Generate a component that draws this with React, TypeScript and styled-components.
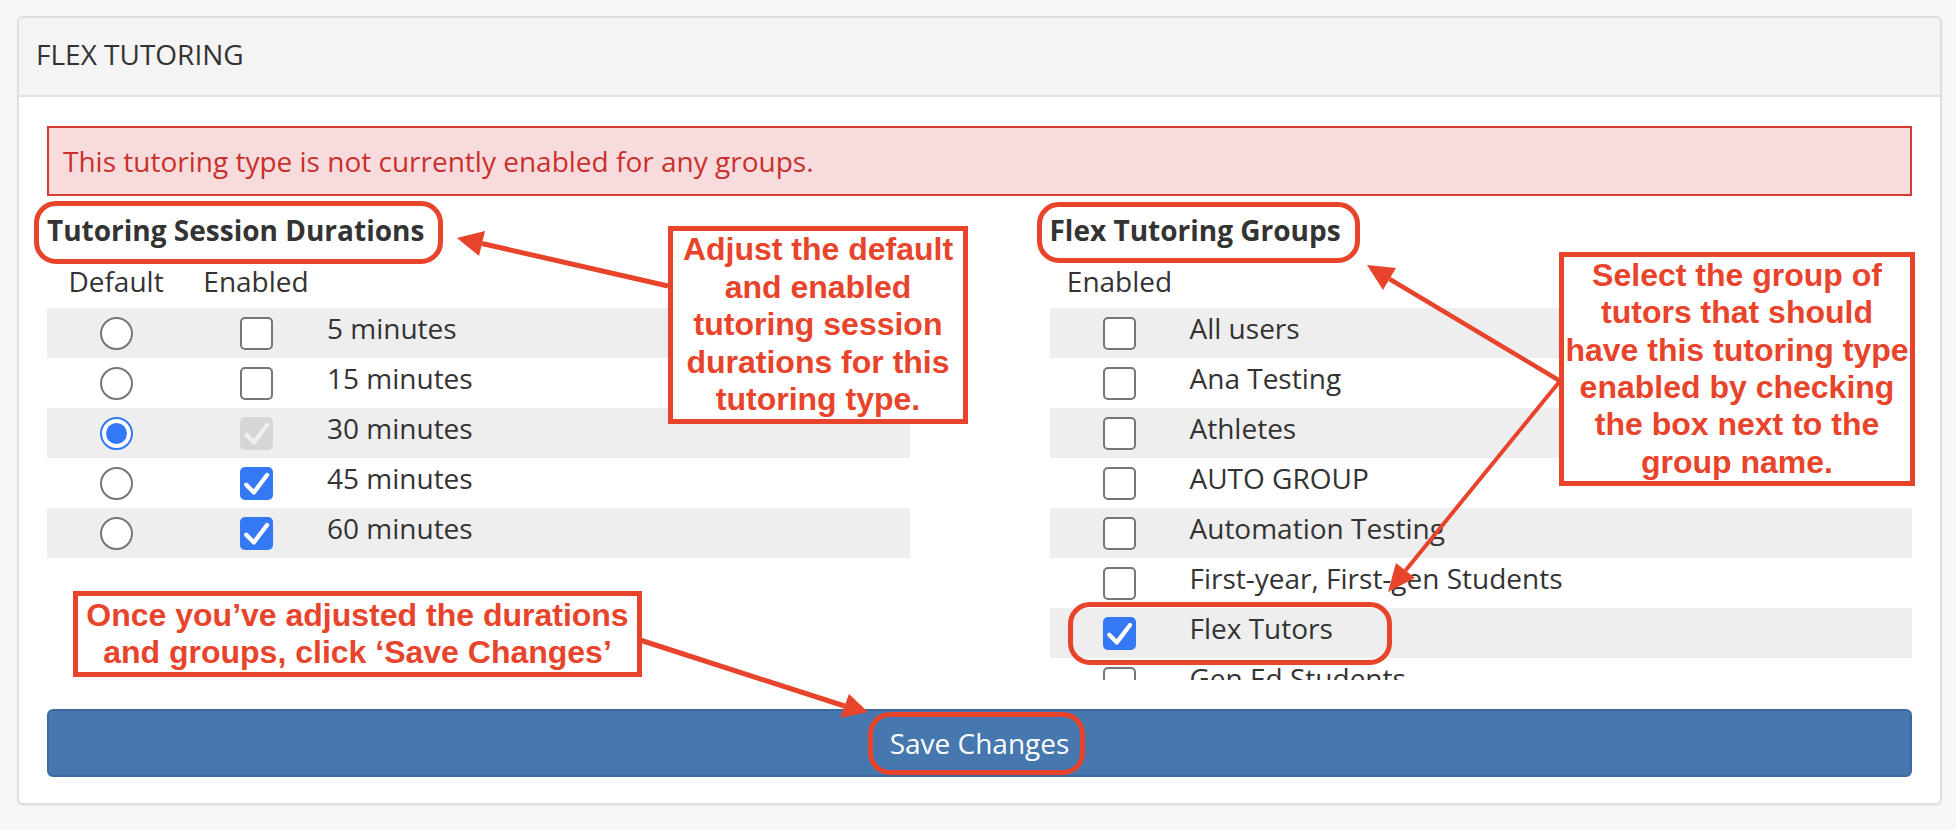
import React from "react";
import styled, { createGlobalStyle } from "styled-components";

const ANNOT = "#e8442b";

const GlobalStyle = createGlobalStyle`
  html, body { margin: 0; padding: 0; }
  body {
    background: #f7f7f7;
    font-family: "Open Sans", "Noto Sans", sans-serif;
    color: #333333;
    -webkit-font-smoothing: antialiased;
  }
  * { box-sizing: border-box; }
`;

const Page = styled.div`
  position: relative;
  width: 1956px;
  height: 830px;
  padding: 16px 14px 0 17px;
  overflow: hidden;
`;

const Panel = styled.section`
  background: #ffffff;
  border: 2px solid #dedede;
  border-radius: 6px;
  box-shadow: 0 1px 2px rgba(0, 0, 0, 0.06);
  overflow: hidden;
`;

const PanelHeading = styled.header`
  background: #f4f4f4;
  border-bottom: 2px solid #e0e0e0;
  padding: 16px 17px 21px;
  font-size: 28px;
  line-height: 40px;
  color: #333333;
`;

const PanelBody = styled.div`
  padding: 29px 28px 26px;
`;

const Alert = styled.div`
  background: #f8dcdd;
  border: 2px solid #d83a30;
  color: #c9302c;
  padding: 13px 14px;
  font-size: 28px;
  line-height: 40px;
`;

const Columns = styled.div`
  margin-top: 14px;
  display: grid;
  grid-template-columns: 1fr 1fr;
  column-gap: 140px;
  align-items: start;
`;

const Column = styled.div`
  display: flex;
  flex-direction: column;
`;

const SectionTitle = styled.h3`
  margin: 0;
  font-size: 28px;
  line-height: 40px;
  font-weight: 700;
  color: #333333;
`;

const Grid = styled.div<{ $cols: string }>`
  display: grid;
  grid-template-columns: ${(p) => p.$cols};
  align-items: center;
`;

const HeadRow = styled(Grid)`
  padding: 11px 0 7px;
  font-size: 28px;
  line-height: 40px;
  color: #333333;
`;

const HeadCell = styled.div`
  text-align: center;
`;

const Row = styled(Grid)<{ $striped: boolean }>`
  height: 50px;
  background: ${(p) => (p.$striped ? "#eeeeee" : "#ffffff")};
`;

const Cell = styled.div`
  display: flex;
  justify-content: center;
  align-items: center;
`;

const Label = styled.div`
  font-size: 28px;
  line-height: 40px;
  padding-bottom: 11px;
  color: #333333;
  white-space: nowrap;
`;

const ScrollList = styled.div`
  height: 372px;
  overflow: hidden;
`;

const RadioDot = styled.span<{ $on: boolean }>`
  position: relative;
  width: 33px;
  height: 33px;
  border-radius: 50%;
  border: 2px solid ${(p) => (p.$on ? "#3478f6" : "#767676")};
  background: #ffffff;
  &::after {
    content: "";
    display: ${(p) => (p.$on ? "block" : "none")};
    position: absolute;
    left: 4px;
    top: 4px;
    width: 21px;
    height: 21px;
    border-radius: 50%;
    background: #3478f6;
  }
`;

const Box = styled.span<{ $checked: boolean; $disabled: boolean }>`
  display: flex;
  align-items: center;
  justify-content: center;
  width: 33px;
  height: 33px;
  border-radius: 5px;
  border: ${(p) => (p.$checked ? "none" : "2px solid #767676")};
  background: ${(p) =>
    !p.$checked ? "#ffffff" : p.$disabled ? "#d6d6d6" : "#3478f6"};
  color: ${(p) => (p.$disabled ? "#efefef" : "#ffffff")};
`;

const SaveButton = styled.button`
  display: block;
  width: 100%;
  margin-top: 29px;
  height: 68px;
  background: #4677af;
  border: 2px solid #3c6a9f;
  border-radius: 6px;
  color: #ffffff;
  font-family: "Open Sans", "Noto Sans", sans-serif;
  font-size: 28px;
  line-height: 40px;
  padding: 12px;
  cursor: pointer;
`;

/* ---------- annotation layer ---------- */

const Overlay = styled.svg`
  position: absolute;
  left: 0;
  top: 0;
  pointer-events: none;
`;

const Ring = styled.div<{ $x: number; $y: number; $w: number; $h: number }>`
  position: absolute;
  left: ${(p) => p.$x}px;
  top: ${(p) => p.$y}px;
  width: ${(p) => p.$w}px;
  height: ${(p) => p.$h}px;
  border: 5px solid ${ANNOT};
  border-radius: 22px;
  pointer-events: none;
`;

const Callout = styled.div<{ $x: number; $y: number; $w: number; $h: number }>`
  position: absolute;
  left: ${(p) => p.$x}px;
  top: ${(p) => p.$y}px;
  width: ${(p) => p.$w}px;
  height: ${(p) => p.$h}px;
  border: 5px solid ${ANNOT};
  background: #ffffff;
  color: ${ANNOT};
  font-family: "Liberation Sans", Arial, sans-serif;
  font-weight: 700;
  font-size: 32px;
  line-height: 37.4px;
  text-align: center;
  white-space: nowrap;
  display: flex;
  flex-direction: column;
  justify-content: center;
  align-items: center;
`;

function Check() {
  return (
    <svg width="33" height="33" viewBox="0 0 100 100" fill="none">
      <path
        d="M19 54 L42 77 L82 24"
        stroke="currentColor"
        strokeWidth="13"
        strokeLinecap="round"
        strokeLinejoin="round"
      />
    </svg>
  );
}

function Checkbox({ checked = false, disabled = false }: { checked?: boolean; disabled?: boolean }) {
  return (
    <Box $checked={checked} $disabled={disabled}>
      {checked && <Check />}
    </Box>
  );
}

type Pt = [number, number];
function Arrow({ from, tip, b1, b2, w = 5 }: { from: Pt; tip: Pt; b1: Pt; b2: Pt; w?: number }) {
  const bc: Pt = [(b1[0] + b2[0]) / 2, (b1[1] + b2[1]) / 2];
  return (
    <g>
      <line x1={from[0]} y1={from[1]} x2={bc[0]} y2={bc[1]} stroke={ANNOT} strokeWidth={w} />
      <polygon points={`${tip[0]},${tip[1]} ${b1[0]},${b1[1]} ${b2[0]},${b2[1]}`} fill={ANNOT} />
    </g>
  );
}

const durations = [
  { label: "5 minutes", def: false, on: false, dis: false },
  { label: "15 minutes", def: false, on: false, dis: false },
  { label: "30 minutes", def: true, on: true, dis: true },
  { label: "45 minutes", def: false, on: true, dis: false },
  { label: "60 minutes", def: false, on: true, dis: false },
];

const groups = [
  { label: "All users", on: false },
  { label: "Ana Testing", on: false },
  { label: "Athletes", on: false },
  { label: "AUTO GROUP", on: false },
  { label: "Automation Testing", on: false },
  { label: "First-year, First-gen Students", on: false },
  { label: "Flex Tutors", on: true },
  { label: "Gen Ed Students", on: false },
];

const LEFT_COLS = "138px 142px 1fr";
const RIGHT_COLS = "140px 1fr";

export default function App() {
  return (
    <>
      <GlobalStyle />
      <Page>
        <Panel>
          <PanelHeading>FLEX TUTORING</PanelHeading>
          <PanelBody>
            <Alert>This tutoring type is not currently enabled for any groups.</Alert>
            <Columns>
              <Column>
                <SectionTitle>Tutoring Session Durations</SectionTitle>
                <HeadRow $cols={LEFT_COLS}>
                  <HeadCell>Default</HeadCell>
                  <HeadCell>Enabled</HeadCell>
                  <div />
                </HeadRow>
                {durations.map((d, i) => (
                  <Row key={d.label} $cols={LEFT_COLS} $striped={i % 2 === 0}>
                    <Cell>
                      <RadioDot $on={d.def} />
                    </Cell>
                    <Cell>
                      <Checkbox checked={d.on} disabled={d.dis} />
                    </Cell>
                    <Label>{d.label}</Label>
                  </Row>
                ))}
              </Column>
              <Column>
                <SectionTitle>Flex Tutoring Groups</SectionTitle>
                <HeadRow $cols={RIGHT_COLS}>
                  <HeadCell>Enabled</HeadCell>
                  <div />
                </HeadRow>
                <ScrollList>
                  {groups.map((g, i) => (
                    <Row key={g.label} $cols={RIGHT_COLS} $striped={i % 2 === 0}>
                      <Cell>
                        <Checkbox checked={g.on} />
                      </Cell>
                      <Label>{g.label}</Label>
                    </Row>
                  ))}
                </ScrollList>
              </Column>
            </Columns>
            <SaveButton type="button">Save Changes</SaveButton>
          </PanelBody>
        </Panel>

        <Overlay width="1956" height="830" viewBox="0 0 1956 830">
          <Arrow from={[668, 286]} tip={[457, 238]} b1={[485, 231]} b2={[479, 256]} />
          <Arrow from={[1560, 381]} tip={[1367, 265]} b1={[1396, 268]} b2={[1383, 290]} w={4.5} />
          <Arrow from={[1560, 381]} tip={[1388, 592]} b1={[1415, 578]} b2={[1396, 563]} w={4} />
          <Arrow from={[640, 640]} tip={[868, 712]} b1={[849, 694]} b2={[840, 718]} />
        </Overlay>

        <Ring $x={34} $y={201} $w={409} $h={63} />
        <Ring $x={1037} $y={202} $w={323} $h={61} />
        <Ring $x={1068} $y={602} $w={324} $h={63} />
        <Ring $x={868} $y={712} $w={217} $h={63} />

        <Callout $x={668} $y={226} $w={300} $h={198}>
          <span>Adjust the default</span>
          <span>and enabled</span>
          <span>tutoring session</span>
          <span>durations for this</span>
          <span>tutoring type.</span>
        </Callout>
        <Callout $x={1559} $y={252} $w={356} $h={234}>
          <span>Select the group of</span>
          <span>tutors that should</span>
          <span>have this tutoring type</span>
          <span>enabled by checking</span>
          <span>the box next to the</span>
          <span>group name.</span>
        </Callout>
        <Callout $x={73} $y={591} $w={569} $h={86}>
          <span>Once you’ve adjusted the durations</span>
          <span>and groups, click ‘Save Changes’</span>
        </Callout>
      </Page>
    </>
  );
}
